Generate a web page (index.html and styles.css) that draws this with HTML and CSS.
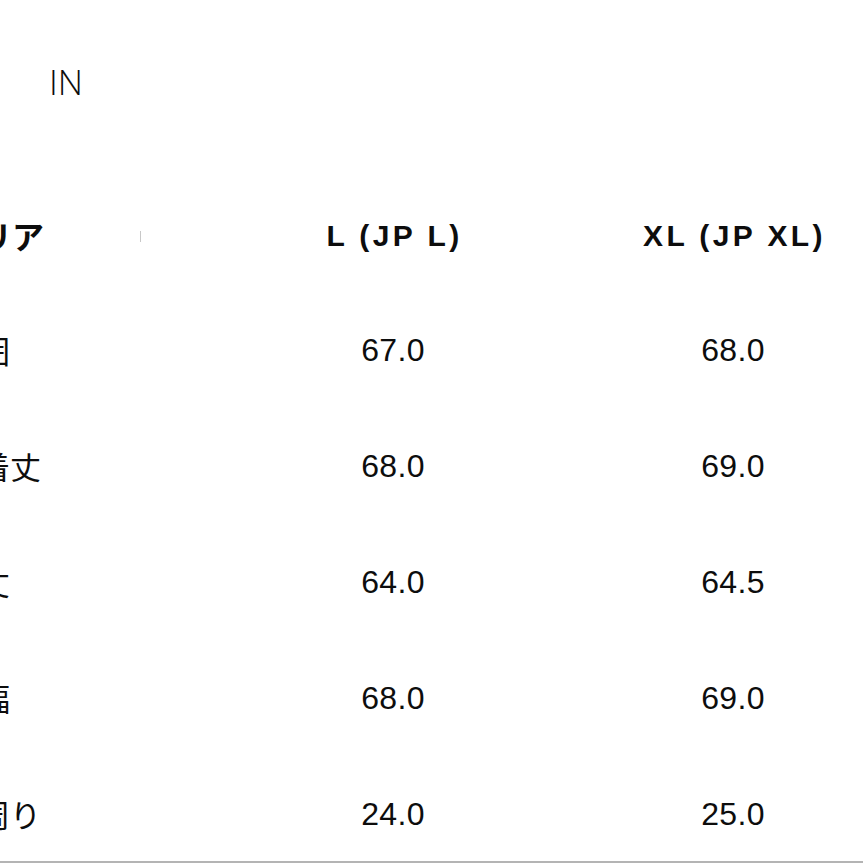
FILE: index.html
```html
<!DOCTYPE html>
<html lang="ja">
<head>
<meta charset="utf-8">
<title>サイズ表</title>
<link rel="stylesheet" href="styles.css">
</head>
<body>
<div class="page">
  <div class="unit-bar">
    <span class="unit">IN</span>
  </div>
  <div class="size-table">
    <div class="cell label head">エリア<span class="tick"></span></div>
    <div class="cell size head">L (JP L)</div>
    <div class="cell size head">XL (JP XL)</div>

    <div class="cell label">胸囲</div>
    <div class="cell num">67.0</div>
    <div class="cell num">68.0</div>

    <div class="cell label">総着丈</div>
    <div class="cell num">68.0</div>
    <div class="cell num">69.0</div>

    <div class="cell label">袖丈</div>
    <div class="cell num">64.0</div>
    <div class="cell num">64.5</div>

    <div class="cell label">肩幅</div>
    <div class="cell num">68.0</div>
    <div class="cell num">69.0</div>

    <div class="cell label">裾周り</div>
    <div class="cell num">24.0</div>
    <div class="cell num">25.0</div>
  </div>
</div>
</body>
</html>
```

FILE: styles.css
```css
html, body {
  margin: 0;
  padding: 0;
  background: #ffffff;
}
body {
  width: 863px;
  height: 863px;
  overflow: hidden;
  color: #0d0d0d;
  font-family: "Liberation Sans", Arial, "Noto Sans CJK JP", sans-serif;
}
.page {
  width: 863px;
}
.unit-bar {
  height: 179px;
  padding-left: 49px;
  box-sizing: border-box;
  padding-top: 58px;
}
.unit {
  font-family: "Open Sans", "Liberation Sans", sans-serif;
  font-weight: 300;
  font-size: 35px;
  line-height: 48px;
  display: block;
}
.size-table {
  display: grid;
  grid-template-columns: 275px 340px 340px;
  grid-template-rows: 113px repeat(4, 116px) 105px;
  margin-left: -52px;
  width: 916px;
  border-bottom: 2px solid #b4b4b4;
}
.cell {
  align-self: start;
  white-space: nowrap;
}
.head {
  line-height: 113px;
}
.label {
  font-family: "Noto Sans CJK JP", sans-serif;
  font-size: 31px;
  line-height: 116px;
  display: flex;
  align-items: center;
}
.label.head {
  font-weight: 700;
  line-height: 113px;
  height: 113px;
  font-size: 32px;
}
.tick {
  width: 1px;
  height: 11px;
  background: #c8c8c8;
  margin-left: 96px;
  margin-top: 2px;
}
.size {
  text-align: center;
  font-weight: 700;
  font-size: 30px;
  letter-spacing: 3.4px;
  padding-left: 3px;
}
.num {
  text-align: center;
  font-size: 32px;
  line-height: 116px;
  letter-spacing: 0.3px;
}
```
